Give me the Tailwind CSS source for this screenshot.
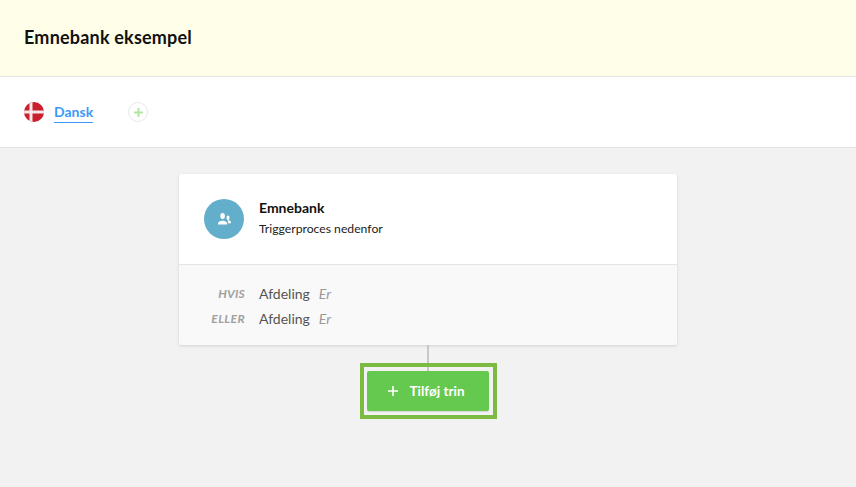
<!DOCTYPE html>
<html lang="da">
<head>
  <meta charset="UTF-8" />
  <title>Emnebank eksempel</title>
  <script src="https://cdn.jsdelivr.net/npm/@tailwindcss/browser@4"></script>
</head>
<body class="bg-[#f2f2f2] h-[487px] overflow-hidden font-['Lato',sans-serif]">

  <!-- Title bar -->
  <header class="h-[77px] bg-[#ffffe9] border-b border-[#e4e4e4] pl-6 pt-[26px]">
    <h1 class="text-[18px] leading-[22px] font-bold tracking-[0.2px] text-[#111]">Emnebank eksempel</h1>
  </header>

  <!-- Language tabs -->
  <nav class="h-[71px] bg-white border-b border-[#e2e2e2] pl-6 flex items-center">
    <svg class="w-5 h-5" viewBox="0 0 20 20">
      <defs><clipPath id="flag"><circle cx="10" cy="10" r="10"/></clipPath></defs>
      <g clip-path="url(#flag)">
        <rect width="20" height="20" fill="#c8202f"/>
        <rect x="5.5" width="3" height="20" fill="#f4e9ea"/>
        <rect y="8.5" width="20" height="3" fill="#f4e9ea"/>
      </g>
    </svg>
    <a class="ml-2.5 mt-px text-[14px] leading-[18px] font-bold text-[#3b99fc] border-b border-[#3b99fc] pb-px">Dansk</a>
    <span class="ml-[35px] w-5 h-5 rounded-full border border-[#e8e8e8] flex items-center justify-center">
      <svg class="w-[9px] h-[9px]" viewBox="0 0 10 10"><path d="M5 0v10M0 5h10" stroke="#b5e3a5" stroke-width="2.2"/></svg>
    </span>
  </nav>

  <main class="flex flex-col items-center pt-[26px]">
    <!-- Trigger card -->
    <section class="w-[498px] bg-white rounded-[2px] shadow-[0_1px_3px_rgba(0,0,0,0.14)]">
      <div class="h-[91px] pl-[25px] flex items-center border-b border-[#e4e4e4]">
        <span class="w-10 h-10 rounded-full bg-[#63aeca] flex items-center justify-center">
          <svg class="w-[13px] h-3" viewBox="0 0 13 12" fill="#fff">
            <ellipse cx="4.6" cy="3" rx="2.3" ry="3"/>
            <path d="M0 11.5c0-1.6.3-2.5 1.6-3l1.7-.8h2.6l1.7.8c1.2.5 1.5 1.4 1.5 3z"/>
            <ellipse cx="10" cy="4.8" rx="1.5" ry="2.2"/>
            <path d="M9.4 7.6l1.6-.3 1 .5c.7.4 1 1 1 2.4h-3v-1.2c0-.5-.2-1-.6-1.4z"/>
          </svg>
        </span>
        <div class="ml-[15px] -mt-[3px]">
          <div class="text-[14px] leading-[18px] font-bold text-[#111]">Emnebank</div>
          <div class="mt-[4px] text-[12.2px] leading-[16px] text-[#222]">Triggerproces nedenfor</div>
        </div>
      </div>
      <div class="h-[80px] bg-[#f9f9f9] pt-4 rounded-b-[2px]">
        <div class="h-[25px] flex items-center">
          <span class="w-[66px] text-right text-[12px] tracking-[0.2px] font-bold italic text-[#a0a0a0]">HVIS</span>
          <span class="ml-[14px] text-[14px] text-[#555]">Afdeling</span>
          <span class="ml-[9px] text-[14px] italic text-[#999]">Er</span>
        </div>
        <div class="h-[25px] flex items-center">
          <span class="w-[66px] text-right text-[12px] tracking-[0.4px] font-bold italic text-[#a0a0a0]">ELLER</span>
          <span class="ml-[14px] text-[14px] text-[#555]">Afdeling</span>
          <span class="ml-[9px] text-[14px] italic text-[#999]">Er</span>
        </div>
      </div>
    </section>

    <div class="w-0.5 h-[26px] bg-[#c8c8c8]"></div>

    <!-- Add step, highlighted: the connector shows through the gap -->
    <div class="border-[4px] border-[#7cbb42] pt-1 pb-1 pl-[3px] pr-1 -mt-2 ml-px">
      <button class="w-[122px] h-10 pr-[3px] rounded-[2px] bg-[#66c94f] flex items-center justify-center text-white text-[13.5px] font-bold shadow-[0_1px_1px_rgba(0,0,0,0.12)]">
        <svg class="w-2.5 h-2.5 mr-[11px]" viewBox="0 0 10 10"><path d="M5 0v10M0 5h10" stroke="#fff" stroke-width="1.6"/></svg>
        Tilføj trin
      </button>
    </div>
  </main>
</body>
</html>
